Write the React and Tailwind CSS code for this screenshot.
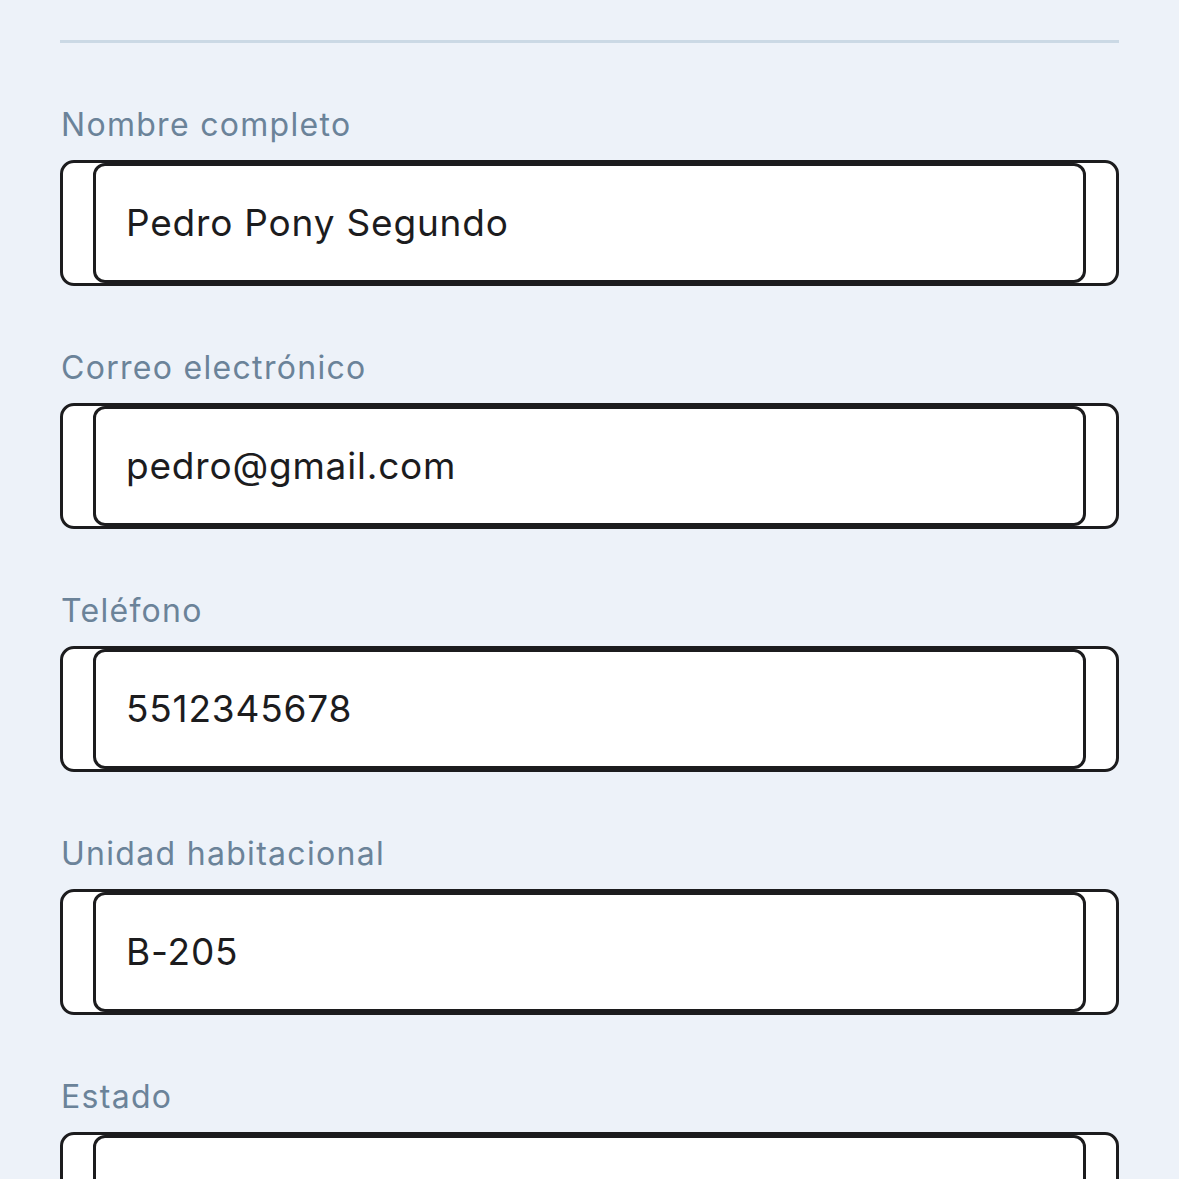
const fields = [
  { label: "Nombre completo", value: "Pedro Pony Segundo" },
  { label: "Correo electrónico", value: "pedro@gmail.com" },
  { label: "Teléfono", value: "5512345678" },
  { label: "Unidad habitacional", value: "B-205" },
  { label: "Estado", value: "" },
];

const Field = ({ label, value }) => (
  <div className="mt-[61px]">
    <label className="block text-[32px] leading-[42px] tracking-[1.3px] text-[#6b8399] pl-[1px]">
      {label}
    </label>
    <div className="mt-[14px] h-[126px] bg-white border-[3px] border-[#1c1c1e] rounded-[14px] px-[30px]">
      <div className="h-full bg-white border-[3.5px] border-[#1c1c1e] rounded-[12px] flex items-center pl-[30px]">
        <span className="text-[37px] tracking-[0.8px] text-[#1c1c1e]">{value}</span>
      </div>
    </div>
  </div>
);

export default function App() {
  return (
    <div
      className="min-h-screen bg-[#edf2f9] px-[60px] pt-[40px] overflow-hidden"
      style={{ fontFamily: "Inter, 'Noto Sans', sans-serif" }}
    >
      <div className="h-[3px] bg-[#cbd9e5]" />
      {fields.map((f) => (
        <Field key={f.label} label={f.label} value={f.value} />
      ))}
    </div>
  );
}
